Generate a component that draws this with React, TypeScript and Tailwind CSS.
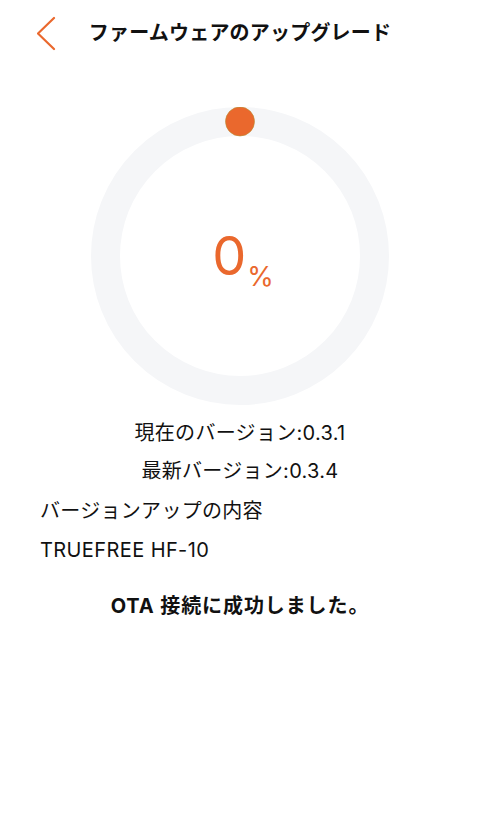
const ORANGE = '#ea682d'

function ProgressRing({ percent }: { percent: number }) {
  const size = 298
  const r = 134.5
  const c = size / 2
  const angle = (percent / 100) * 2 * Math.PI - Math.PI / 2
  const dotX = c + r * Math.cos(angle)
  const dotY = c + r * Math.sin(angle)

  return (
    <div className="relative mx-auto h-[298px] w-[298px]">
      <svg width={size} height={size} viewBox={`0 0 ${size} ${size}`}>
        <circle cx={c} cy={c} r={r} fill="none" stroke="#f5f6f8" strokeWidth="29" />
        <circle cx={dotX} cy={dotY} r="14.5" fill={ORANGE} stroke="#b9892d" strokeWidth="0.6" />
      </svg>
      {/* 中央のパーセント表示 */}
      <div className="absolute inset-0 flex items-center justify-center">
        <div className="flex items-end pl-[6px] text-[#ea682d]">
          <span className="text-[54px] leading-none">{percent}</span>
          <span className="ml-[1px] translate-y-[7px] text-[27px] leading-none">%</span>
        </div>
      </div>
    </div>
  )
}

export default function App() {
  return (
    <div
      className="h-[833px] w-[480px] bg-white text-[#111111]"
      style={{ fontFamily: 'Inter, "Noto Sans CJK JP", sans-serif' }}
    >
      {/* ヘッダー */}
      <div className="relative flex h-[66px] items-center justify-center">
        <button className="absolute left-[31px] top-[10px] p-[6px]">
          <svg width="20" height="36" viewBox="0 0 20 36" fill="none">
            <polyline
              points="17,2 1,17.5 17,33"
              stroke={ORANGE}
              strokeWidth="2.2"
              strokeLinecap="round"
              strokeLinejoin="round"
            />
          </svg>
        </button>
        <h1 className="text-[20px] font-bold tracking-[0.2px]">ファームウェアのアップグレード</h1>
      </div>

      <div className="mt-[41px]">
        <ProgressRing percent={0} />
      </div>

      <div className="mt-[9px] text-[20px] tracking-[0.3px]">
        <p className="h-[38px] text-center leading-[38px]">現在のバージョン:0.3.1</p>
        <p className="h-[38px] text-center leading-[38px]">最新バージョン:0.3.4</p>
        <p className="mt-[2px] h-[39px] px-[40px] leading-[39px]">バージョンアップの内容</p>
        <p className="h-[39px] px-[40px] leading-[39px] tracking-[0.4px]">TRUEFREE HF-10</p>
        <p className="mt-[17px] text-center font-bold leading-[39px] tracking-[0.9px]">OTA 接続に成功しました。</p>
      </div>
    </div>
  )
}
